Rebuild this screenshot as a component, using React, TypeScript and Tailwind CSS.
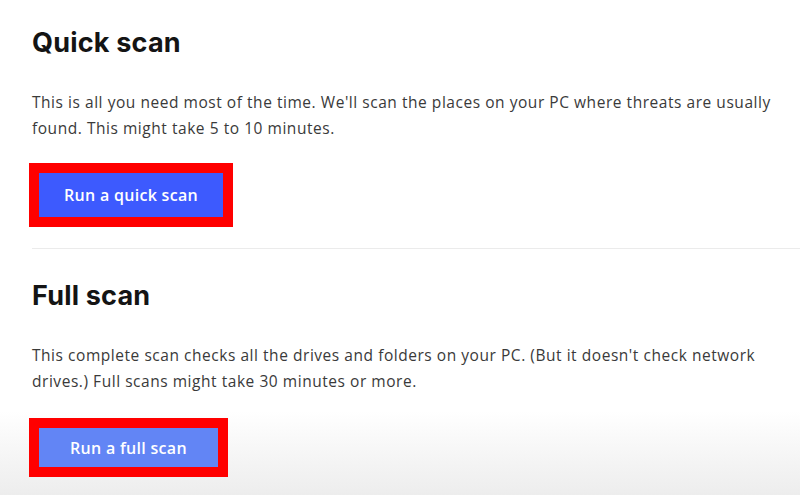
import React from 'react'

interface ScanSectionProps {
  title: string
  text: string
  button: string
  buttonClass: string
  buttonGap: string
}

function ScanSection({ title, text, button, buttonClass, buttonGap }: ScanSectionProps) {
  return (
    <section className="flex flex-col items-start">
      <h2 className="text-[27px] leading-[34px] font-bold tracking-[0.2px] text-[#141414] [font-family:Inter,'Noto_Sans',sans-serif]">
        {title}
      </h2>
      <p className="mt-[29px] pr-1 text-[15.5px] leading-[26px] tracking-[0.54px] text-[#3a3a3a] [font-family:'Open_Sans',sans-serif]">
        {text}
      </p>
      <div className={`-ml-[3px] border-[10px] border-[#ff0000] ${buttonGap}`}>
        <button className={`text-[16px] tracking-[0.3px] font-semibold text-white [font-family:'Open_Sans',sans-serif] ${buttonClass}`}>
          {button}
        </button>
      </div>
    </section>
  )
}

export default function App() {
  return (
    <div className="w-[800px] h-[495px] overflow-hidden bg-[linear-gradient(to_bottom,#ffffff_0%,#ffffff_83%,#ededed_100%)]">
      <div className="pl-8 pt-[26px]">
        <ScanSection
          title="Quick scan"
          text="This is all you need most of the time. We'll scan the places on your PC where threats are usually found. This might take 5 to 10 minutes."
          button="Run a quick scan"
          buttonClass="w-[184px] h-[44px] bg-[#3d5afe]"
          buttonGap="mt-[22px]"
        />
        <div className="mt-[21px] h-px bg-[#ebebeb]" />
        <div className="pt-[30px]">
          <ScanSection
            title="Full scan"
            text="This complete scan checks all the drives and folders on your PC. (But it doesn't check network drives.) Full scans might take 30 minutes or more."
            button="Run a full scan"
            buttonClass="w-[179px] h-[39px] bg-[#6285f5]"
            buttonGap="mt-[24px]"
          />
        </div>
      </div>
    </div>
  )
}
